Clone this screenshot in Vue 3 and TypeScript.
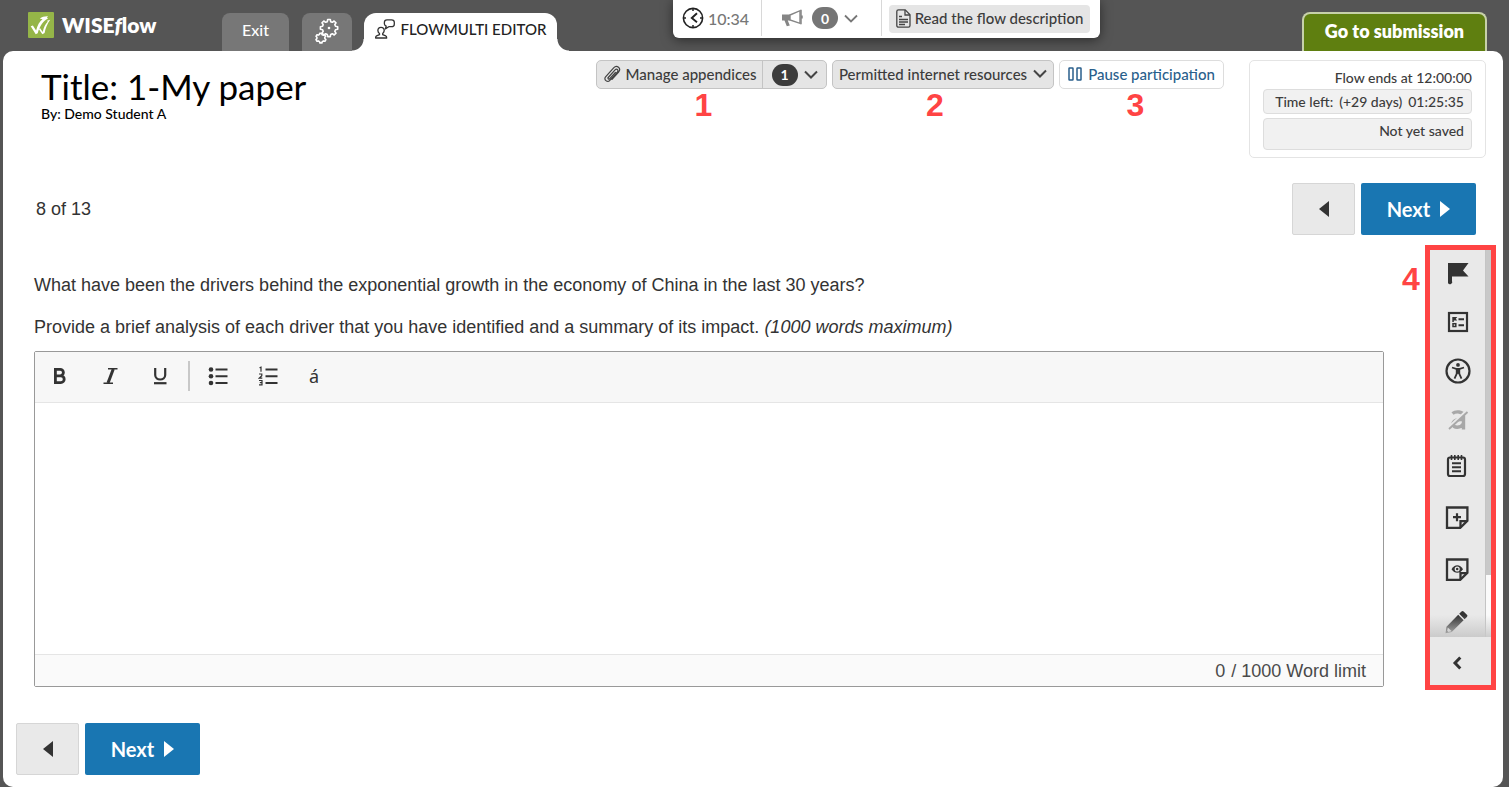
<script setup lang="ts">
import { ref } from 'vue'

interface Tool {
  id: string
  label: string
}

const navTools: Tool[] = [
  { id: 'flag', label: 'Flag question' },
  { id: 'list', label: 'Question overview' },
  { id: 'access', label: 'Accessibility' },
  { id: 'strike', label: 'Answer masking' },
]
const noteTools: Tool[] = [
  { id: 'notepad', label: 'Notepad' },
  { id: 'add', label: 'Add sticky note' },
  { id: 'view', label: 'View sticky notes' },
  { id: 'pencil', label: 'Highlighter' },
]

const answer = ref('')
</script>

<template>
  <div class="app">
    <header class="top">
      <a class="brand" href="#">
        <svg class="brand-mark" viewBox="0 0 26 26" aria-hidden="true">
          <rect width="26" height="26" rx="1" fill="#95b548" />
          <path d="M2.700 14.200l2.200-.8 3.200 5.200c1.200-5.200 3.400-9.200 6.400-11.400l-2.700-.6c2.300-1.900 5.200-2.600 8.200-2.400l-1 1.400.9 1.200c-4.600 1.800-8.200 7.200-10.200 14.500l-2 .9z" fill="#fff" />
          <path d="M11.800 15.800l2.900 4.200c1-4.600 2.600-8 5-10.200l-.6-1 3.100-1c-2.900 3.800-4.600 8.200-5.600 13.200l-2.200 1.200-3.400-4.600z" fill="#fff" />
        </svg>
        <span class="brand-name">WISE<i>f</i>low</span>
      </a>

      <nav class="tabs">
        <a class="tab exit" href="#">Exit</a>
        <button class="tab gear" type="button" aria-label="Settings">
          <svg viewBox="0 0 24 26" fill="none" stroke="#fff" stroke-width="1.600" stroke-linejoin="round">
            <path d="M12.700 1.500h2.600l.4 2.200 1.600.6 1.800-1.300 1.900 1.800-1.200 1.900.7 1.600 2.200.4v2.600l-2.200.4-.7 1.600 1.200 1.800-1.800 1.900-1.900-1.300-1.600.7-.4 2.200h-2.600l-.4-2.200-1.600-.7-1.900 1.300-1.800-1.900 1.200-1.800-.6-1.600-2.200-.4V8.700l2.200-.4.6-1.600L7 4.800 8.800 3l1.900 1.300 1.600-.6z" />
            <circle cx="14" cy="10" r="1.300" fill="#fff" stroke="none" />
            <path d="M4.700 15.400h2l.4 1.300 1.400.5 1.200-.5 1 1.600-.9 1 .1 1.400 1 .9-1 1.700-1.400-.4-1.200.7-.4 1.300h-2l-.4-1.300-1.200-.7-1.300.4-1-1.700.9-1v-1.300l-.9-1 1-1.600 1.300.4 1-.5z" />
          </svg>
        </button>
        <a class="tab active" href="#">
          <svg viewBox="0 0 20 20" fill="none" stroke="#333" stroke-width="1.300" stroke-linejoin="round">
            <path d="M6 8.300c2 0 3.300 1.400 3.200 3.300-.1 1.300-.7 2.200-1.500 2.900v1.200l3 1.100c.8.300 1 1 1 2.200H.6c0-1.200.3-1.900 1-2.200l2.900-1.100v-1.200C3.500 13.800 3 12.900 2.900 11.600 2.800 9.700 4 8.300 6 8.300z" />
            <path d="M12 .8h4.500c1.700 0 2.800 1 2.800 2.500v1.900c0 1.600-1.200 2.500-2.800 2.500h-2.700l-3.500 2.200.9-2.700C10 6.700 9.400 6 9.400 5.100V3.300C9.400 1.800 10.400.8 12 .8z" />
          </svg>
          FLOWMULTI EDITOR
        </a>
      </nav>

      <div class="status">
        <div class="clock">
          <svg viewBox="0 0 22 22" fill="none" stroke="#222">
            <circle cx="11" cy="11" r="9.600" stroke-width="1.600" />
            <path d="M15 6.200L9.800 11l5.200 4.200" stroke-width="1.900" />
            <path d="M11 2v2M11 18v2M2 11h2M18 11h2" stroke-width="1.500" />
          </svg>
          <span>10:34</span>
        </div>
        <button class="news" type="button" aria-label="Messages">
          <svg class="horn" viewBox="0 0 22 18">
            <path d="M1 5.500h8v6H6.800l2 5-3 .7L3.500 11.500H1z" fill="#858585" />
            <path d="M9 6l10-4.300v12.600L9 11z" fill="#fff" stroke="#858585" stroke-width="1.400" />
            <path d="M20 .8v14.400M21 6.500v3" stroke="#858585" stroke-width="1.500" />
          </svg>
          <span class="pill grey">0</span>
          <svg class="chev" viewBox="0 0 14 9"><path d="M1 1.500l6 6 6-6" fill="none" stroke="#777" stroke-width="1.800" /></svg>
        </button>
        <div class="read-cell">
          <button class="read" type="button">
            <svg viewBox="0 0 15 19" fill="none" stroke="#444" stroke-width="1.300">
              <path d="M2.500.8h6.700L14 5.800v10.700c0 1-.6 1.700-1.600 1.700H2.500c-1 0-1.700-.7-1.700-1.700v-14C.8 1.500 1.500.8 2.500.8z" />
              <path d="M9 1v5h5M3 7.500h3M3 10.500h9M3 13h9M3 15.500h6" />
            </svg>
            Read the flow description
          </button>
        </div>
      </div>

      <a class="submit" href="#">Go to submission</a>
    </header>

    <main class="sheet">
      <section class="heading">
        <div class="titles">
          <h1>Title: 1-My paper</h1>
          <p>By: Demo Student A</p>
        </div>

        <div class="actions">
          <div class="action appendices">
            <button class="part" type="button">
              <svg class="clip" viewBox="0 0 20 20" fill="none" stroke="#444" stroke-width="1.300" stroke-linecap="round">
                <path d="M5.500 13.700l7.200-8c1.700-1.800 4 .2 2.500 2l-8 9c-2.500 2.800-7-.8-4.500-3.700l8.500-9.500c3.400-3.600 8.400.6 5.200 4.500l-6.900 7.700" />
                <path d="M5.500 13.700c-.8 1.200.7 2.300 1.600 1.300l6-6.700" />
              </svg>
              Manage appendices
            </button>
            <button class="part toggle" type="button" aria-label="Show appendices">
              <span class="pill dark">1</span>
              <svg class="chev" viewBox="0 0 14 9"><path d="M1 1.500l6 6 6-6" fill="none" stroke="#444" stroke-width="2" /></svg>
            </button>
            <b class="callout">1</b>
          </div>
          <div class="action resources">
            <button class="part" type="button">
              Permitted internet resources
              <svg class="chev" viewBox="0 0 14 9"><path d="M1 1.500l6 6 6-6" fill="none" stroke="#444" stroke-width="2" /></svg>
            </button>
            <b class="callout">2</b>
          </div>
          <div class="action pause">
            <button class="part" type="button">
              <svg class="bars" viewBox="0 0 14 14" fill="none" stroke="#2a5f8c" stroke-width="1.500">
                <rect x="1" y="1" width="4" height="12" rx=".5" /><rect x="9" y="1" width="4" height="12" rx=".5" />
              </svg>
              Pause participation
            </button>
            <b class="callout">3</b>
          </div>
        </div>

        <aside class="deadline">
          <p>Flow ends at 12:00:00</p>
          <p class="field"><span>Time left:</span><span>(+29 days)</span><span>01:25:35</span></p>
          <p class="field saved">Not yet saved</p>
        </aside>
      </section>

      <nav class="pager upper">
        <span class="count">8 of 13</span>
        <button class="prev" type="button" aria-label="Previous">
          <svg viewBox="0 0 10 16"><path d="M10 0v16L0 8z" fill="#333" /></svg>
        </button>
        <button class="next" type="button">
          Next <svg viewBox="0 0 10 16"><path d="M0 0v16l10-8z" fill="#fff" /></svg>
        </button>
      </nav>

      <div class="work">
        <section class="question">
          <p>What have been the drivers behind the exponential growth in the economy of China in the last 30 years?</p>
          <p>Provide a brief analysis of each driver that you have identified and a summary of its impact. <em>(1000 words maximum)</em></p>

          <div class="editor">
            <div class="format">
              <button type="button" aria-label="Bold">
                <svg viewBox="0 0 20 20" fill="none" stroke="#333" stroke-width="2.800"><path d="M5.400 3.400h4.800a3.200 3.200 0 010 6.400H5.400zM5.400 9.800h5.400a3.400 3.400 0 010 6.800H5.400z" /></svg>
              </button>
              <button type="button" aria-label="Italic">
                <svg viewBox="0 0 20 20" fill="none" stroke="#333"><path d="M8 2.800h9.500M3.500 17.200H13" stroke-width="1.500" /><path d="M13.300 3L8 17" stroke-width="3" /></svg>
              </button>
              <button type="button" aria-label="Underline">
                <svg viewBox="0 0 20 20" fill="none" stroke="#333"><path d="M5.200 2v7c0 6 10 6 10 0V2" stroke-width="2.200" /><path d="M4 17.200h12.500" stroke-width="2.200" /></svg>
              </button>
              <span class="rule"></span>
              <button type="button" aria-label="Bulleted list">
                <svg viewBox="0 0 20 20" fill="#333"><circle cx="3" cy="3.500" r="2.300" /><circle cx="3" cy="10.300" r="2.300" /><circle cx="3" cy="17" r="2.300" /><path d="M7.500 2.500h12v2h-12zM7.500 9.300h12v2h-12zM7.500 16h12v2h-12z" /></svg>
              </button>
              <button type="button" aria-label="Numbered list">
                <svg viewBox="0 0 20 20" fill="none" stroke="#333"><path d="M7.500 3.500h12M7.500 10.300h12M7.500 17h12" stroke-width="2" /><path d="M1.500 1.700l1.500-.5v4.600M1 8h2.800v1.800L1.300 12.200h3M1 14.500h3v4.300H1M1.800 16.600H4" stroke-width="1.200" /></svg>
              </button>
              <button class="accent" type="button" aria-label="Special characters">á</button>
            </div>
            <textarea v-model="answer" aria-label="Answer"></textarea>
            <div class="words"><span>0</span> <span>/ 1000 Word limit</span></div>
          </div>
        </section>

        <aside class="tools">
          <div class="tool-scroll">
            <div class="tool-list">
              <button v-for="t in navTools" :key="t.id" class="nav-tool" type="button" :aria-label="t.label">
                <svg v-if="t.id === 'flag'" viewBox="0 0 28 28" fill="#333"><path d="M4 4h20.500l-5.500 7.500 5.500 6H8V22a2 2 0 01-4 2z" /></svg>
                <svg v-else-if="t.id === 'list'" viewBox="0 0 28 28" fill="none" stroke="#333">
                  <rect x="5" y="5" width="18" height="18" stroke-width="2.200" />
                  <path d="M14.500 11.300h5.500M14.500 17.300h5.500" stroke-width="1.900" />
                  <rect x="9" y="15.700" width="2.800" height="2.800" stroke-width="1.500" />
                  <path d="M8.300 9h5L11.800 10.800l1.400 1.800H9.800V14H8.300z" fill="#333" stroke="none" />
                </svg>
                <svg v-else-if="t.id === 'access'" viewBox="0 0 28 28" fill="none" stroke="#333">
                  <circle cx="14" cy="14" r="11.500" stroke-width="2.200" />
                  <circle cx="14" cy="7.900" r="1.900" fill="#333" stroke="none" />
                  <path d="M8 10.500l4.200 1.300h3.600l4.200-1.300M12.800 12v4.500L10.500 21.700M15.200 12v4.500l2.300 5.200" stroke-width="1.800" />
                  <path d="M11.900 11.200h4.200v5.600h-4.200z" fill="#333" stroke="none" />
                </svg>
                <svg v-else viewBox="0 0 28 28" fill="none" stroke="#a8a8a8">
                  <path d="M8.500 7.500c3-2.400 11-2.600 11 2.500v13.500M18 13.500c-4.500-.3-9 .8-9 4.500 0 4.500 8 4.300 10.500-.5" stroke-width="3.400" />
                  <path d="M4.500 21.500L22.500 5" stroke="#e9e9e9" stroke-width="2.800" />
                  <path d="M5 23L23.500 6" stroke-width="1.900" />
                </svg>
              </button>
              <button v-for="t in noteTools" :key="t.id" class="note-tool" type="button" :aria-label="t.label">
                <svg v-if="t.id === 'notepad'" viewBox="0 0 28 28" fill="none" stroke="#333">
                  <rect x="5" y="5.500" width="17" height="18.500" rx="2" stroke-width="2.200" />
                  <path d="M8.500 3v5M11.800 3v5M15.200 3v5M18.500 3v5" stroke-width="1.600" />
                  <path d="M9 11.300h9M9 15.300h9M9 19.300h9" stroke-width="1.900" />
                </svg>
                <svg v-else-if="t.id === 'pencil'" viewBox="0 0 28 28" fill="#333">
                  <path d="M18.500 3.500c.7-.7 1.400-.7 2.100 0l3.300 3.300c.7.700.7 1.400 0 2.100l-2.300 2.300-5.400-5.400zM15.200 6.800l5.400 5.400L8.700 24.100l-6.200 1.200 1-6.600z" />
                  <path d="M4.800 19.400l4 3.800-3.500.7-1.100-1.200z" fill="#e9e9e9" />
                </svg>
                <svg v-else viewBox="0 0 28 28" fill="none" stroke="#333">
                  <path d="M4 3.500h20.400v13.200l-7.200 7.200H4z" stroke-width="2.300" />
                  <path d="M17.500 23.500v-6.300h6.300" stroke-width="2.300" />
                  <path v-if="t.id === 'add'" d="M14 9.200v8M10 13.200h8" stroke-width="2.200" />
                  <template v-else>
                    <path d="M8.500 13.200c3-5.400 8.500-5.400 11.500 0-3 4.800-8.500 4.800-11.500 0z" fill="#333" stroke="none" />
                    <circle cx="14.200" cy="13" r="1.900" fill="#333" stroke="#e9e9e9" stroke-width="1.300" />
                  </template>
                </svg>
              </button>
            </div>
            <div class="track"><div class="thumb"></div></div>
          </div>
          <button class="collapse" type="button" aria-label="Expand toolbar">
            <svg viewBox="0 0 10 14"><path d="M8.300 1.500L3 7l5.300 5.500" fill="none" stroke="#333" stroke-width="3" /></svg>
          </button>
          <b class="callout">4</b>
        </aside>
      </div>

      <nav class="pager lower">
        <button class="prev" type="button" aria-label="Previous">
          <svg viewBox="0 0 10 16"><path d="M10 0v16L0 8z" fill="#333" /></svg>
        </button>
        <button class="next" type="button">
          Next <svg viewBox="0 0 10 16"><path d="M0 0v16l10-8z" fill="#fff" /></svg>
        </button>
      </nav>
    </main>
  </div>
</template>

<style>
body {
  background: #555;
}
</style>

<style scoped>
* {
  box-sizing: border-box;
}
.app {
  min-height: 100vh;
  display: flex;
  flex-direction: column;
  font-family: Lato, "Open Sans", sans-serif;
  font-size: 15px;
  font-weight: 500;
  color: #3c3c3c;
}
p, h1 {
  margin: 0;
}
button {
  font: inherit;
  color: inherit;
  border: 0;
  margin: 0;
  padding: 0;
  background: none;
  white-space: nowrap;
}
a {
  text-decoration: none;
  white-space: nowrap;
}
svg {
  display: block;
  flex: none;
}

/* Top bar */
.top {
  height: 51px;
  display: flex;
  align-items: flex-start;
  padding: 0 22px 0 28px;
}
.brand {
  display: flex;
  align-items: center;
  gap: 8px;
  width: 194px;
  padding-top: 12px;
  color: #fff;
  font-size: 21px;
  line-height: 26px;
  font-weight: 800;
}
.brand-mark {
  width: 26px;
  height: 26px;
}
.tabs {
  display: flex;
  align-items: flex-end;
  gap: 12px;
  padding-top: 13px;
}
.tab {
  display: flex;
  align-items: center;
  justify-content: center;
  height: 38px;
  border-radius: 8px 8px 0 0;
  background: #777;
  color: #fff;
}
.exit {
  width: 67px;
  font-size: 16px;
  padding-bottom: 6px;
}
.gear {
  width: 50px;
  margin-left: 1px;
  padding-bottom: 2px;
}
.gear svg {
  width: 24px;
  height: 26px;
}
.active {
  position: relative;
  width: 193px;
  gap: 6px;
  padding-bottom: 6px;
  border-radius: 12px 12px 0 0;
  background: #fff;
  color: #222;
}
.active svg {
  width: 20px;
  height: 20px;
}
.active::before,
.active::after {
  content: "";
  position: absolute;
  bottom: 0;
  width: 12px;
  height: 12px;
}
.active::before {
  right: 100%;
  background: radial-gradient(circle at 0 0, transparent 11px, #fff 12px);
}
.active::after {
  left: 100%;
  background: radial-gradient(circle at 100% 0, transparent 11px, #fff 12px);
}
.status {
  display: flex;
  height: 38px;
  margin-left: 116px;
  border-radius: 0 0 6px 6px;
  background: #fff;
  box-shadow: 0 2px 12px rgba(0, 0, 0, 0.5);
  clip-path: inset(0 -16px -13px -16px);
}
.clock,
.news {
  display: flex;
  align-items: center;
  height: 36px;
  border-right: 1px solid #d8d8d8;
}
.clock {
  width: 89px;
  padding-left: 9px;
  gap: 4px;
  font-size: 16px;
  color: #777;
}
.clock svg {
  width: 22px;
  height: 22px;
}
.news {
  width: 120px;
  padding-left: 19px;
}
.horn {
  width: 22px;
  height: 18px;
  margin-right: 9px;
}
.pill {
  display: flex;
  align-items: center;
  justify-content: center;
  width: 26px;
  height: 22px;
  margin-right: 6px;
  border-radius: 11px;
  color: #fff;
  font-weight: 700;
  font-size: 14px;
}
.grey {
  background: #757575;
}
.dark {
  background: #3c3c3c;
}
.chev {
  width: 14px;
  height: 9px;
}
.read-cell {
  padding: 5px 10px 5px 7px;
}
.read {
  display: flex;
  align-items: center;
  justify-content: center;
  gap: 4px;
  width: 201px;
  height: 28px;
  padding-bottom: 2px;
  border-radius: 4px;
  background: #e5e5e5;
}
.read svg {
  width: 15px;
  height: 19px;
}
.submit {
  width: 185px;
  height: 39px;
  margin-top: 12px;
  margin-left: auto;
  border: 2px solid #c7d1aa;
  border-bottom: 0;
  border-radius: 8px 8px 0 0;
  background: #5f7f10;
  color: #fff;
  font-size: 18px;
  line-height: 34px;
  font-weight: 800;
  text-align: center;
}

/* Sheet */
.sheet {
  flex: 1;
  margin: 0 6px 0 3px;
  border-radius: 10px;
  background: #fff;
}
.heading {
  display: grid;
  grid-template-columns: 555px auto 1fr;
  align-items: start;
  padding: 9px 17px 0 38px;
}
.titles {
  padding-top: 6px;
  color: #000;
}
h1 {
  font-size: 35px;
  line-height: 40px;
  font-weight: 400;
}
.titles p {
  font-size: 14px;
  line-height: 15px;
}
.actions {
  display: flex;
  gap: 5px;
}
.action {
  position: relative;
  display: flex;
  height: 29px;
  border: 1px solid #c4c4c4;
  border-radius: 5px;
  background: #e5e5e5;
}
.part {
  flex: 1;
  display: flex;
  align-items: center;
  justify-content: center;
  padding-bottom: 2px;
}
.appendices {
  width: 231px;
}
.appendices .part {
  gap: 4px;
}
.appendices .toggle {
  flex: 0 0 64px;
  gap: 0;
  padding-bottom: 0;
  border-left: 1px solid #c4c4c4;
}
.clip {
  width: 19px;
  height: 20px;
}
.resources {
  width: 222px;
}
.resources .part {
  gap: 6px;
}
.pause {
  width: 165px;
  border-color: #ddd;
  background: #fff;
  color: #2a5f8c;
}
.pause .part {
  gap: 6px;
}
.bars {
  width: 14px;
  height: 14px;
}
.callout {
  position: absolute;
  font: bold 32px/32px "Liberation Sans", Arial, sans-serif;
  color: #ff4444;
}
.action .callout {
  top: 28px;
  left: 0;
  right: 16px;
  text-align: center;
}
.pause .callout {
  right: 12px;
}
.deadline {
  justify-self: end;
  width: 237px;
  height: 98px;
  padding: 6px 13px;
  border: 1px solid #e4e4e4;
  border-radius: 5px;
  text-align: right;
  font-size: 14px;
  line-height: 22px;
  white-space: nowrap;
}
.field {
  display: flex;
  justify-content: flex-end;
  gap: 6px;
  height: 25px;
  padding: 1px 7px;
  border: 1px solid #ddd;
  border-radius: 4px;
  background: #f1f1f1;
}
.saved {
  height: 32px;
  margin-top: 4px;
}

/* Previous and next */
.pager {
  display: flex;
  align-items: center;
  gap: 6px;
}
.upper {
  padding: 25px 27px 0 33px;
}
.lower {
  padding: 33px 13px 12px;
}
.count {
  margin-right: auto;
  font: 18px/24px "Liberation Sans", Arial, sans-serif;
  color: #333;
}
.prev,
.next {
  display: flex;
  align-items: center;
  justify-content: center;
  height: 52px;
  border-radius: 2px;
}
.prev {
  width: 63px;
  border: 1px solid #d6d6d6;
  background: #e9e9e9;
}
.next {
  width: 115px;
  gap: 10px;
  background: #1976b2;
  color: #fff;
  font-size: 20px;
  font-weight: 700;
}
.pager svg {
  width: 10px;
  height: 16px;
}

/* Question */
.work {
  display: flex;
  align-items: flex-start;
  padding: 10px 7px 0 31px;
}
.question {
  flex: 1;
  padding-top: 28px;
  font: 18px/24px "Liberation Sans", Arial, sans-serif;
  color: #333;
}
.question p {
  margin-bottom: 18px;
}
.question p + p {
  margin-bottom: 12px;
}
.editor {
  border: 1px solid #999;
  border-radius: 2px;
}
.format {
  display: flex;
  align-items: center;
  height: 51px;
  padding-bottom: 2px;
  border-bottom: 1px solid #e5e5e5;
  background: #f7f7f7;
}
.format button {
  display: flex;
  align-items: center;
  justify-content: center;
  width: 50px;
  height: 48px;
}
.format svg {
  width: 20px;
  height: 20px;
}
.format .accent {
  width: 42px;
  font: 18px/24px "Noto Sans", sans-serif;
}
.rule {
  width: 2px;
  height: 30px;
  margin: 0 3px;
  background: #c8c8c8;
}
textarea {
  display: block;
  width: 100%;
  height: 251px;
  padding: 12px;
  border: 0;
  outline: 0;
  resize: none;
  background: #fff;
  font: inherit;
}
.words {
  display: flex;
  justify-content: flex-end;
  gap: 6px;
  height: 32px;
  padding: 4px 17px;
  border-top: 1px solid #e5e5e5;
  background: #fafafa;
  color: #4a4a4a;
}

/* Side tools */
.tools {
  position: relative;
  width: 71px;
  margin-left: 41px;
  border: 5px solid #ff4444;
  background: #e9e9e9;
}
.tools .callout {
  top: 13px;
  left: -28px;
}
.tool-scroll {
  position: relative;
  display: flex;
  height: 387px;
  overflow: hidden;
}
.tool-scroll::after {
  content: "";
  position: absolute;
  inset: auto 0 0 0;
  height: 22px;
  background: linear-gradient(rgba(205, 205, 205, 0), rgba(200, 200, 200, 0.9));
}
.tool-list {
  flex: 1;
}
.tool-list button {
  display: flex;
  align-items: center;
  justify-content: center;
  width: 100%;
}
.tool-list svg {
  width: 28px;
  height: 28px;
}
.nav-tool {
  height: 46px;
  margin-bottom: 3px;
}
.note-tool {
  height: 40px;
  margin-bottom: 12px;
  padding-right: 2px;
}
.track {
  width: 6px;
  border-left: 1px solid #c4c4c4;
  background: #fafafa;
}
.thumb {
  height: 325px;
  background: #c8c8c8;
}
.collapse {
  display: flex;
  align-items: center;
  justify-content: center;
  width: 100%;
  height: 48px;
  padding: 4px 8px 0 0;
}
.collapse svg {
  width: 10px;
  height: 14px;
}
</style>
